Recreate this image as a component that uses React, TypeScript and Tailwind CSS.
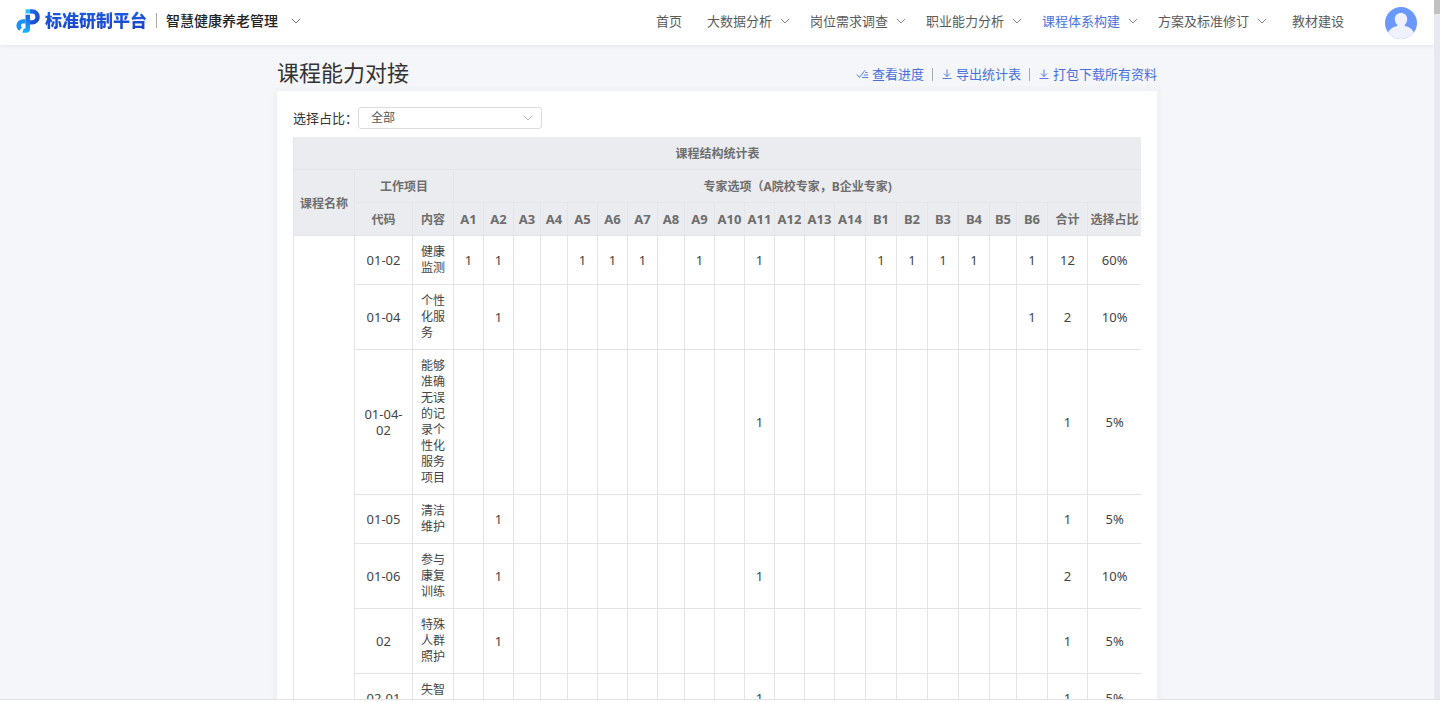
import type { ReactNode } from 'react';

type NavItem = { label: string; menu?: boolean; active?: boolean };
type Row = { code: string; name: string; votes: string[]; total: number; ratio: string };

const navItems: NavItem[] = [
  { label: '首页' },
  { label: '大数据分析', menu: true },
  { label: '岗位需求调查', menu: true },
  { label: '职业能力分析', menu: true },
  { label: '课程体系构建', menu: true, active: true },
  { label: '方案及标准修订', menu: true },
  { label: '教材建设' },
];

const experts = [
  { id: 'A1', col: 'w-[30px]' },
  { id: 'A2', col: 'w-[30px]' },
  { id: 'A3', col: 'w-[27px]' },
  { id: 'A4', col: 'w-[27px]' },
  { id: 'A5', col: 'w-[30px]' },
  { id: 'A6', col: 'w-[30px]' },
  { id: 'A7', col: 'w-[30px]' },
  { id: 'A8', col: 'w-[27px]' },
  { id: 'A9', col: 'w-[30px]' },
  { id: 'A10', col: 'w-[30px]' },
  { id: 'A11', col: 'w-[30px]' },
  { id: 'A12', col: 'w-[30px]' },
  { id: 'A13', col: 'w-[30px]' },
  { id: 'A14', col: 'w-[31px]' },
  { id: 'B1', col: 'w-[31px]' },
  { id: 'B2', col: 'w-[31px]' },
  { id: 'B3', col: 'w-[31px]' },
  { id: 'B4', col: 'w-[31px]' },
  { id: 'B5', col: 'w-[27px]' },
  { id: 'B6', col: 'w-[31px]' },
];

const rows: Row[] = [
  {
    code: '01-02',
    name: '健康监测',
    votes: ['A1', 'A2', 'A5', 'A6', 'A7', 'A9', 'A11', 'B1', 'B2', 'B3', 'B4', 'B6'],
    total: 12,
    ratio: '60%',
  },
  { code: '01-04', name: '个性化服务', votes: ['A2', 'B6'], total: 2, ratio: '10%' },
  { code: '01-04-02', name: '能够准确无误的记录个性化服务项目', votes: ['A11'], total: 1, ratio: '5%' },
  { code: '01-05', name: '清洁维护', votes: ['A2'], total: 1, ratio: '5%' },
  { code: '01-06', name: '参与康复训练', votes: ['A2', 'A11'], total: 2, ratio: '10%' },
  { code: '02', name: '特殊人群照护', votes: ['A2'], total: 1, ratio: '5%' },
  { code: '02-01', name: '失智照护', votes: ['A11'], total: 1, ratio: '5%' },
];

function Chevron({ className }: { className?: string }) {
  return (
    <svg viewBox="0 0 10 6" fill="none" stroke="currentColor" className={`h-[6px] w-[10px] shrink-0 ${className ?? ''}`}>
      <path d="M0.8 0.8 5 5 9.2 0.8" />
    </svg>
  );
}

function DownloadIcon() {
  return (
    <svg viewBox="0 0 12 12" fill="none" stroke="currentColor" strokeWidth="0.9" className="size-3">
      <path d="M6 1.5v7M3 5.5l3 3 3-3M1.5 10.5h9" />
    </svg>
  );
}

function ProgressIcon() {
  return (
    <svg viewBox="0 0 12 12" fill="none" stroke="currentColor" strokeWidth="0.9" className="h-3 w-[13px]">
      <path d="M0.5 6.5 3 9.5 8.5 2.2M8.7 4.5h2.3M7.2 7h4.3M5.5 9.5h6.2" />
    </svg>
  );
}

function Logo() {
  return (
    <svg viewBox="0 0 24 24" className="size-6" aria-hidden="true">
      <defs>
        <linearGradient id="bowl" x1="0" y1="0" x2="1" y2="1">
          <stop offset="0" stopColor="#1b6cf0" />
          <stop offset="1" stopColor="#1a3fc8" />
        </linearGradient>
        <linearGradient id="stem" x1="0" y1="0" x2="0" y2="1">
          <stop offset="0" stopColor="#1d5be6" />
          <stop offset="1" stopColor="#17b4fa" />
        </linearGradient>
      </defs>
      <path d="M9.5 0.3H14v4.2H9.5z" fill="#22c8f6" />
      <path d="M14 0.3h2.2a7.6 7.6 0 0 1 0 15.2H14v-4.3h2a3.35 3.35 0 0 0 0-6.7h-2z" fill="url(#bowl)" />
      <path d="M9.5 10.2H7A6.5 6.5 0 0 0 .4 16.5c0 2.2 1.1 4.1 2.9 5.2l2.8-3.4a2 2 0 0 1 1.1-3.8h2.3z" fill="#1a92f6" />
      <path d="M9.5 5.8H14v14a3.9 3.9 0 0 1-3.9 3.9H6.3l1.5-4.3h1.7z" fill="url(#stem)" />
    </svg>
  );
}

function Avatar() {
  return (
    <svg viewBox="0 0 32 32" className="size-8" aria-hidden="true">
      <clipPath id="avatar">
        <circle cx="16" cy="16" r="16" />
      </clipPath>
      <g clipPath="url(#avatar)">
        <path d="M0 0h32v32H0z" fill="#6b98fc" />
        <path d="M16 6c3.6 0 6.2 2.5 6.2 6.1 0 2.4-.9 4.3-2.4 5.6v1.3c5 1 9 4 9.7 8.7V33h-27v-5.3c.7-4.7 4.7-7.7 9.7-8.700v-1.300c-1.500-1.300-2.400-3.200-2.400-5.600C9.800 8.500 12.400 6 16 6z" fill="#eff2fe" />
      </g>
    </svg>
  );
}

function Header() {
  return (
    <header className="relative flex h-[45px] shrink-0 items-center justify-between bg-white px-4 shadow-[0_1px_4px_rgba(0,0,40,0.08)]">
      <div className="flex items-center pb-1">
        <a href="#home" className="flex items-center gap-[5px]">
          <Logo />
          <span className="bg-linear-to-b from-[#1c60e8] to-[#1b3fc4] bg-clip-text text-[17px] leading-6 font-black text-transparent">
            标准研制平台
          </span>
        </a>
        <span className="mx-[9px] h-[15px] w-px bg-[#aaa]" />
        <button type="button" className="flex items-center gap-[13px] text-sm font-medium text-[#222]">
          智慧健康养老管理
          <Chevron className="text-[#777]" />
        </button>
      </div>
      <div className="flex items-center">
        <nav className="flex items-center pb-1">
          {navItems.map((item) => (
            <a
              key={item.label}
              href="#nav"
              className={`flex items-center gap-2 text-[13px] leading-5 ${item.menu ? 'px-[10px]' : 'px-[15px]'} ${
                item.active ? 'text-[#4a73e0]' : 'text-[#5a5a5a]'
              }`}
            >
              {item.label}
              {item.menu && <Chevron className="text-[#858890]" />}
            </a>
          ))}
        </nav>
        <button type="button" aria-label="个人中心" className="mr-px ml-[26px]">
          <Avatar />
        </button>
      </div>
    </header>
  );
}

function Action({ icon, children }: { icon: ReactNode; children: ReactNode }) {
  return (
    <a href="#action" className="flex items-center gap-[3px]">
      {icon}
      {children}
    </a>
  );
}

function StatTable() {
  const th = 'border-b border-l border-[#e4e5e8] px-0 pt-[9px] pb-[7px] font-bold';
  const td = 'border-b border-l border-[#e4e4e4] px-0 py-2';

  return (
    <table className="w-full table-fixed border-separate border-spacing-0 text-center text-xs leading-4 text-[#444]">
      <colgroup>
        <col className="w-[61px]" />
        <col className="w-[58px]" />
        <col className="w-[41px]" />
        {experts.map((e) => (
          <col key={e.id} className={e.col} />
        ))}
        <col className="w-[40px]" />
        <col className="w-[54px]" />
      </colgroup>
      <thead className="bg-[#ebecf0] text-[#6e6e6e]">
        <tr>
          <th colSpan={25} className={th}>课程结构统计表</th>
        </tr>
        <tr>
          <th rowSpan={2} className={th}>课程名称</th>
          <th colSpan={2} className={th}>工作项目</th>
          <th colSpan={22} className={th}>专家选项（A院校专家，B企业专家)</th>
        </tr>
        <tr>
          <th className={th}>代码</th>
          <th className={th}>内容</th>
          {experts.map((e) => (
            <th key={e.id} className="border-b border-l border-[#e4e5e8] px-0 py-2 text-[13px] leading-4 font-bold">
              {e.id}
            </th>
          ))}
          <th className={th}>合计</th>
          <th className={th}>选择占比</th>
        </tr>
      </thead>
      <tbody>
        {rows.map((row, i) => (
          <tr key={row.code}>
            {i === 0 && <td rowSpan={rows.length} className={td} />}
            <td className="border-b border-l border-[#e4e4e4] p-2 text-[13px] leading-4">{row.code}</td>
            <td className="border-b border-l border-[#e4e4e4] p-2 text-left">{row.name}</td>
            {experts.map((e) => (
              <td key={e.id} className={`${td} text-[13px] leading-4`}>{row.votes.includes(e.id) ? 1 : ''}</td>
            ))}
            <td className={`${td} text-[13px] leading-4`}>{row.total}</td>
            <td className={`${td} text-[13px] leading-4`}>{row.ratio}</td>
          </tr>
        ))}
      </tbody>
    </table>
  );
}

export default function App() {
  return (
    <div className="flex h-screen flex-col bg-white font-['Noto_Sans','Noto_Sans_CJK_SC',sans-serif]">
      <div className="flex min-h-0 flex-1">
        <div className="flex min-w-0 flex-1 flex-col overflow-hidden bg-[#f4f6fa]">
          <Header />
          <main className="mx-auto min-h-0 w-full max-w-[880px] flex-1">
            <div className="flex h-[46px] items-center justify-between pt-2">
              <h1 className="text-[22px] leading-8 text-[#333]">课程能力对接</h1>
              <div className="flex items-center gap-2 pt-1 text-[13px] leading-5 text-[#4a6fdc]">
                <Action icon={<ProgressIcon />}>查看进度</Action>
                <span className="h-[13px] w-px bg-[#aaa]" />
                <Action icon={<DownloadIcon />}>导出统计表</Action>
                <span className="h-[13px] w-px bg-[#aaa]" />
                <Action icon={<DownloadIcon />}>打包下载所有资料</Action>
              </div>
            </div>
            <section className="bg-white p-4 shadow-[0_0_8px_rgba(0,0,40,0.06)]">
              <div className="mb-2 flex items-center">
                <label htmlFor="ratio" className="w-[65px] text-[13px] leading-5 whitespace-nowrap text-[#333]">
                  选择占比：
                </label>
                <div className="relative">
                  <select
                    id="ratio"
                    className="block h-[22px] w-[184px] appearance-none rounded-[3px] border border-[#dcdcdf] bg-white px-3 text-xs text-[#555]"
                  >
                    <option>全部</option>
                  </select>
                  <Chevron className="pointer-events-none absolute top-2 right-[9px] text-[#b4b8c0]" />
                </div>
              </div>
              <StatTable />
            </section>
          </main>
        </div>
        <div className="w-[6px] shrink-0 bg-[#e8e8f1]">
          <div className="h-[14px] bg-[#c1c1c4]" />
        </div>
      </div>
      <div className="h-[3px] shrink-0 border-t border-[#e2e2e6]" />
    </div>
  );
}
